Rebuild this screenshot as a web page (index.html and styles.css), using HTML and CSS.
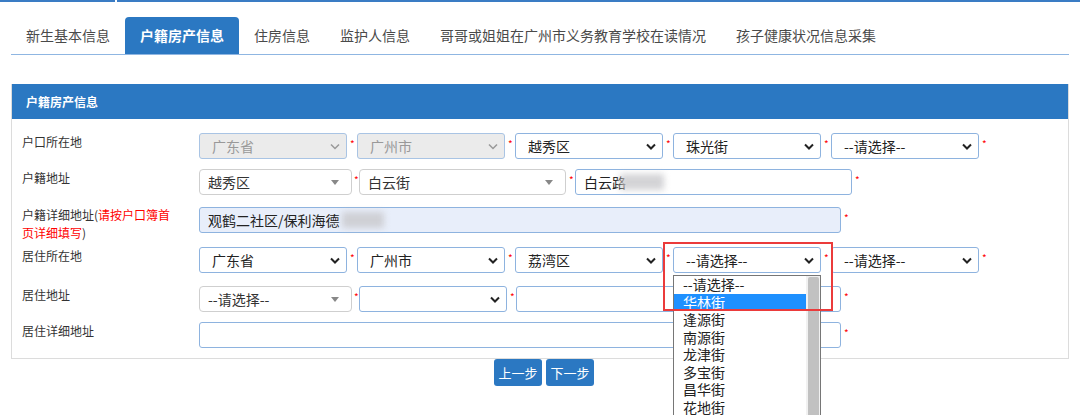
FILE: index.html
```html
<!DOCTYPE html>
<html lang="zh-CN">
<head>
<meta charset="utf-8">
<title>户籍房产信息</title>
<link rel="stylesheet" href="styles.css">
</head>
<body>
<div class="topline"><span class="seg seg-a"></span><span class="seg seg-b"></span></div>
<div class="wrap">
  <ul class="tabs">
    <li class="tab">新生基本信息</li>
    <li class="tab active">户籍房产信息</li>
    <li class="tab">住房信息</li>
    <li class="tab">监护人信息</li>
    <li class="tab">哥哥或姐姐在广州市义务教育学校在读情况</li>
    <li class="tab">孩子健康状况信息采集</li>
  </ul>

  <div class="panel">
    <div class="panel-head">户籍房产信息</div>
    <div class="panel-body">
      <div class="row">
        <div class="label">户口所在地</div>
        <div class="sel disabled w147"><span>广东省</span><svg class="chev" viewBox="0 0 10 6"><polyline points="1,1 5,5 9,1"/></svg></div><span class="star s11">*</span>
        <div class="sel disabled w147"><span>广州市</span><svg class="chev" viewBox="0 0 10 6"><polyline points="1,1 5,5 9,1"/></svg></div><span class="star s11">*</span>
        <div class="sel w147"><span>越秀区</span><svg class="chev" viewBox="0 0 10 6"><polyline points="1,1 5,5 9,1"/></svg></div><span class="star s11">*</span>
        <div class="sel w147"><span>珠光街</span><svg class="chev" viewBox="0 0 10 6"><polyline points="1,1 5,5 9,1"/></svg></div><span class="star s11">*</span>
        <div class="sel w147"><span>--请选择--</span><svg class="chev" viewBox="0 0 10 6"><polyline points="1,1 5,5 9,1"/></svg></div><span class="star s11">*</span>
      </div>

      <div class="row">
        <div class="label">户籍地址</div>
        <div class="s2 w153"><span>越秀区</span><i class="tri"></i></div><span class="star s7">*</span>
        <div class="s2 w207"><span>白云街</span><i class="tri"></i></div><span class="star s9">*</span>
        <div class="inp w277"><span>白云路</span><span class="blur b1"></span></div><span class="star s11">*</span>
      </div>

      <div class="row row-tall">
        <div class="label label-wrap">户籍详细地址(<em>请按户口簿首页详细填写</em>)</div>
        <div class="inp auto w642"><span>观鹤二社区/保利海德</span><span class="blur b2"></span></div><span class="star s11">*</span>
      </div>

      <div class="row">
        <div class="label">居住所在地</div>
        <div class="sel w147"><span>广东省</span><svg class="chev" viewBox="0 0 10 6"><polyline points="1,1 5,5 9,1"/></svg></div><span class="star s11">*</span>
        <div class="sel w147"><span>广州市</span><svg class="chev" viewBox="0 0 10 6"><polyline points="1,1 5,5 9,1"/></svg></div><span class="star s11">*</span>
        <div class="sel w147"><span>荔湾区</span><svg class="chev" viewBox="0 0 10 6"><polyline points="1,1 5,5 9,1"/></svg></div><span class="star s11">*</span>
        <div class="sel w147 open"><span>--请选择--</span><svg class="chev" viewBox="0 0 10 6"><polyline points="1,1 5,5 9,1"/></svg>
          <div class="dropdown">
            <ul class="opts">
              <li>--请选择--</li>
              <li class="hl">华林街</li>
              <li>逢源街</li>
              <li>南源街</li>
              <li>龙津街</li>
              <li>多宝街</li>
              <li>昌华街</li>
              <li>花地街</li>
            </ul>
            <div class="sb"><div class="thumb"></div></div>
          </div>
        </div><span class="star s11">*</span>
        <div class="sel w147"><span>--请选择--</span><svg class="chev" viewBox="0 0 10 6"><polyline points="1,1 5,5 9,1"/></svg></div><span class="star s11">*</span>
      </div>

      <div class="row">
        <div class="label">居住地址</div>
        <div class="s2 w153"><span>--请选择--</span><i class="tri"></i></div><span class="star s7">*</span>
        <div class="sel w148"><span></span><svg class="chev" viewBox="0 0 10 6"><polyline points="1,1 5,5 9,1"/></svg></div><span class="star s9">*</span>
        <div class="inp w325"></div><span class="star s11">*</span>
      </div>

      <div class="row">
        <div class="label">居住详细地址</div>
        <div class="inp w642"></div><span class="star s11">*</span>
      </div>
    </div>
  </div>

  <div class="actions">
    <button class="btn">上一步</button>
    <button class="btn">下一步</button>
  </div>
</div>
<div class="mark"></div>
</body>
</html>
```

FILE: styles.css
```css
html, body {
  margin: 0;
  padding: 0;
  background: #fff;
  overflow: hidden;
}
body {
  font-family: "Noto Sans CJK SC", "Liberation Sans", sans-serif;
  color: #333;
  height: 415px;
  position: relative;
}
.topline {
  display: flex;
  height: 2px;
}
.seg { display: block; height: 2px; background: #3a7cc4; }
.seg-a { width: 115px; }
.seg-b { flex: 1; margin-left: 2px; }

.wrap { padding: 0 11px; }

.tabs {
  list-style: none;
  margin: 15px 0 0;
  padding: 0;
  display: flex;
  border-bottom: 1px solid #8fb6e2;
  height: 37px;
}
.tab {
  padding: 0 15px;
  height: 37px;
  line-height: 37px;
  font-size: 14px;
  color: #4a4a4a;
  white-space: nowrap;
}
.tab.active {
  background: #2b78c2;
  color: #fff;
  font-weight: bold;
  border-radius: 4px 4px 0 0;
}

.panel {
  margin-top: 29px;
  border: 1px solid #dcdcdc;
  border-top: 0;
}
.panel-head {
  background: #2b78c2;
  color: #fff;
  font-size: 12px;
  font-weight: bold;
  height: 35px;
  line-height: 35px;
  padding-left: 14px;
}
.panel-body {
  padding: 14px 0 10px 10px;
  display: flex;
  flex-direction: column;
  gap: 10px;
}
.row {
  display: flex;
  align-items: flex-start;
}
.row:nth-child(3) { margin-top: 2px; }
.row-tall { margin-bottom: -5px; }
.row:nth-child(5) { margin-top: 3px; }
.label {
  width: 177px;
  flex: none;
  font-size: 12px;
  line-height: 18px;
  color: #333;
  box-sizing: border-box;
}
.label-wrap { padding-right: 24px; margin-top: -1px; }
.label em { font-style: normal; color: #f00; }

.sel, .s2, .inp {
  box-sizing: border-box;
  height: 26px;
  flex: none;
  display: flex;
  align-items: center;
  font-size: 14px;
  color: #222;
  position: relative;
  background: #fff;
}
.sel {
  border: 1px solid #8eb3df;
  border-radius: 3px;
  padding: 0 6px 0 12px;
  justify-content: space-between;
}
.sel.disabled {
  background: #ebebeb;
  color: #999;
  border-color: #a9c4e4;
}
.chev {
  width: 10px;
  height: 7px;
  flex: none;
}
.chev polyline {
  fill: none;
  stroke: #222;
  stroke-width: 2;
}
.disabled .chev polyline { stroke: #999; stroke-width: 1.5; }

.s2 {
  border: 1px solid #cfcfcf;
  border-radius: 4px;
  padding: 0 8px;
  justify-content: space-between;
  color: #333;
}
.tri {
  display: block;
  width: 0;
  height: 0;
  border-left: 4px solid transparent;
  border-right: 4px solid transparent;
  border-top: 5px solid #888;
  margin-right: 4px;
}

.inp {
  border: 1px solid #8eb3df;
  border-radius: 3px;
  padding: 0 8px;
  color: #222;
}
.inp.auto { background: #e8eefa; }
.blur {
  display: inline-block;
  height: 16px;
  background: #c9c9cc;
  filter: blur(3px);
  opacity: 0.8;
}
.b1 { width: 44px; margin-left: -6px; }
.b2 { width: 42px; margin-left: 2px; }

.w147 { width: 148px; }
.w148 { width: 148px; }
.w153 { width: 153px; }
.w207 { width: 207px; }
.w277 { width: 277px; }
.w325 { width: 325px; }
.w642 { width: 642px; }

.star {
  color: #f00;
  font-size: 10px;
  line-height: 14px;
  flex: none;
  padding-left: 3px;
  box-sizing: border-box;
  margin-top: 4px;
}
.s11 { width: 10px; }
.s7 { width: 7px; padding-left: 2px; }
.s9 { width: 9px; }

.dropdown {
  position: absolute;
  left: -1px;
  top: 27px;
  width: 148px;
  height: 145px;
  background: #fff;
  border: 1px solid #767676;
  border-bottom: 0;
  box-sizing: border-box;
  z-index: 5;
  display: flex;
}
.opts {
  list-style: none;
  margin: 0;
  padding: 0;
  flex: 1;
}
.opts li {
  height: 17.5px;
  line-height: 17.5px;
  padding-left: 9px;
  font-size: 14px;
  color: #222;
  white-space: nowrap;
}
.opts li.hl {
  background: #1e90ff;
  color: #fff;
}
.sb {
  width: 14px;
  background: #f1f1f1;
  padding: 1px 1px 0 2px;
  box-sizing: border-box;
}
.thumb {
  background: #c1c1c1;
  height: 100%;
  border-radius: 2px 2px 0 0;
}

.actions {
  display: flex;
  justify-content: center;
  gap: 4px;
  padding-left: 8px;
}
.btn {
  background: #2b78c2;
  color: #fff;
  border: 0;
  border-radius: 3px;
  font-family: "Noto Sans CJK SC", sans-serif;
  font-size: 13px;
  width: 48px;
  height: 27px;
  padding: 0;
}

.mark {
  position: absolute;
  left: 663px;
  top: 242px;
  width: 170px;
  height: 69px;
  border: 2px solid #eb3b3b;
  box-sizing: border-box;
  z-index: 10;
}
```
